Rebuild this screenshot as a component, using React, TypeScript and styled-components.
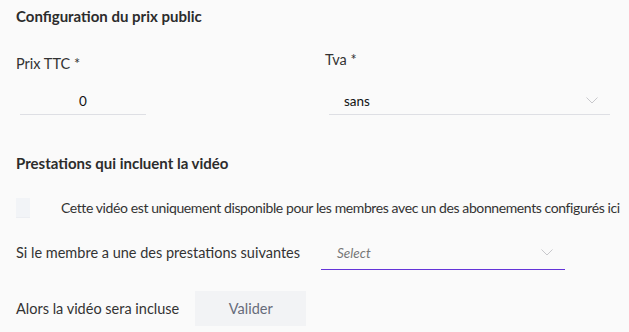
import React from "react";
import styled, { createGlobalStyle } from "styled-components";

const Global = createGlobalStyle`
  html, body { margin: 0; padding: 0; background: #fafafa; }
  body { font-family: Lato, "Noto Sans", sans-serif; color: #333; }
  * { box-sizing: border-box; }
`;

const Page = styled.div`
  width: 629px;
  height: 332px;
  padding: 6px 0 0 16px;
  background: #fafafa;
  overflow: hidden;
`;

const SectionTitle = styled.h3<{ $mt?: number }>`
  margin: ${(p) => p.$mt ?? 0}px 0 0 0;
  font-size: 15px;
  font-weight: 700;
  line-height: 20px;
  color: #2c2c2c;
  white-space: nowrap;
`;

const FieldsRow = styled.div`
  display: flex;
  margin-top: 24px;
`;

const Field = styled.div<{ $width: number; $offset?: number }>`
  width: ${(p) => p.$width}px;
  display: flex;
  flex-direction: column;
  margin-top: ${(p) => p.$offset ?? 0}px;
`;

const Label = styled.div`
  font-size: 14.5px;
  line-height: 20px;
  color: #333;
  white-space: nowrap;
`;

const Underlined = styled.div<{ $width: number; $inset: number; $color?: string; $top: number; $h: number }>`
  margin-left: ${(p) => p.$inset}px;
  margin-top: ${(p) => p.$top}px;
  width: ${(p) => p.$width}px;
  height: ${(p) => p.$h}px;
  flex-shrink: 0;
  border-bottom: 1px solid ${(p) => p.$color ?? "#dedfe4"};
  display: flex;
  align-items: center;
  font-size: 13.5px;
  color: #111;
`;

const NumberValue = styled.span`
  flex: 1;
  text-align: center;
`;

const SelectValue = styled.span<{ $placeholder?: boolean; $pad: number }>`
  flex: 1;
  padding-left: ${(p) => p.$pad}px;
  font-style: ${(p) => (p.$placeholder ? "italic" : "normal")};
  color: ${(p) => (p.$placeholder ? "#777" : "#111")};
`;

const Chevron = styled.svg<{ $right: number }>`
  width: 12px;
  height: 7px;
  margin-right: ${(p) => p.$right}px;
`;

const CheckRow = styled.div`
  display: flex;
  align-items: center;
  margin-top: 25px;
  height: 20px;
`;

const CheckBox = styled.div`
  width: 14px;
  height: 20px;
  flex-shrink: 0;
  background: #f2f4f7;
  border-bottom: 1px solid #eceef2;
  margin-right: 31px;
`;

const Text = styled.span<{ $tight?: boolean }>`
  font-size: ${(p) => (p.$tight ? 14 : 14.5)}px;
  letter-spacing: ${(p) => (p.$tight ? "-0.4px" : "normal")};
  line-height: 20px;
  color: #333;
  white-space: nowrap;
`;

const InlineRow = styled.div<{ $mt: number; $gap: number }>`
  display: flex;
  align-items: center;
  margin-top: ${(p) => p.$mt}px;
  gap: ${(p) => p.$gap}px;
`;

const Button = styled.button`
  width: 111px;
  height: 35px;
  border: none;
  background: #f2f3f5;
  color: #666b7a;
  font-family: inherit;
  font-size: 14.5px;
  cursor: pointer;
`;

const ChevronIcon = ({ right }: { right: number }) => (
  <Chevron $right={right} viewBox="0 0 12 7">
    <path d="M0.5 0.5 L6 6 L11.5 0.5" fill="none" stroke="#c8c8cc" strokeWidth="1" />
  </Chevron>
);

export default function App() {
  return (
    <>
      <Global />
      <Page>
        <SectionTitle>Configuration du prix public</SectionTitle>
        <FieldsRow>
          <Field $width={309} $offset={4}>
            <Label>Prix TTC *</Label>
            <Underlined $width={126} $inset={4} $top={13} $h={28}>
              <NumberValue>0</NumberValue>
            </Underlined>
          </Field>
          <Field $width={300}>
            <Label>Tva *</Label>
            <Underlined $width={281} $inset={4} $top={17} $h={28}>
              <SelectValue $pad={15}>sans</SelectValue>
              <ChevronIcon right={12} />
            </Underlined>
          </Field>
        </FieldsRow>
        <SectionTitle $mt={38}>Prestations qui incluent la vidéo</SectionTitle>
        <CheckRow>
          <CheckBox />
          <Text $tight>Cette vidéo est uniquement disponible pour les membres avec un des abonnements configurés ici</Text>
        </CheckRow>
        <InlineRow $mt={18} $gap={21}>
          <Text>Si le membre a une des prestations suivantes</Text>
          <Underlined $width={244} $inset={0} $top={0} $h={34} $color="#6434d8">
            <SelectValue $placeholder $pad={16}>Select</SelectValue>
            <ChevronIcon right={12} />
          </Underlined>
        </InlineRow>
        <InlineRow $mt={21} $gap={16}>
          <Text>Alors la vidéo sera incluse</Text>
          <Button>Valider</Button>
        </InlineRow>
      </Page>
    </>
  );
}
